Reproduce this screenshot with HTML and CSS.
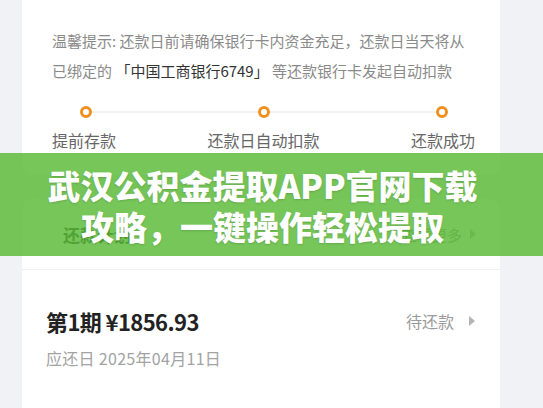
FILE: index.html
```html
<!DOCTYPE html>
<html lang="zh-CN">
<head>
    <meta charset="UTF-8">
    <meta name="viewport" content="width=device-width, initial-scale=1.0">
    <title>还款计划</title>
    <link rel="stylesheet" href="styles.css">
</head>
<body>

    <div class="page">
        <!-- Tip card -->
        <div class="card tip-card">
            <p class="tip-text">温馨提示: 还款日前请确保银行卡内资金充足，还款日当天将从已绑定的 <span class="bank">「中国工商银行6749」</span> 等还款银行卡发起自动扣款</p>

            <div class="steps">
                <span class="dot"></span>
                <span class="dot"></span>
                <span class="dot"></span>
            </div>
            <div class="step-labels">
                <span>提前存款</span>
                <span>还款日自动扣款</span>
                <span>还款成功</span>
            </div>
        </div>

        <!-- Plan card -->
        <div class="card plan-card">
            <div class="plan-header">
                <h3>还款计划</h3>
                <span class="more">查看更多 <i class="arrow"></i></span>
            </div>
            <div class="plan-row">
                <div class="plan-main">
                    <div class="plan-amount">第1期 ¥1856.93</div>
                    <div class="plan-date">应还日 2025年04月11日</div>
                </div>
                <span class="plan-status">待还款 <i class="arrow"></i></span>
            </div>
        </div>
    </div>

    <!-- Title banner -->
    <div class="banner">
        <h1>武汉公积金提取APP官网下载<br>攻略，一键操作轻松提取</h1>
    </div>

</body>
</html>
```

FILE: styles.css
```css
/* Basic Reset */
* {
    margin: 0;
    padding: 0;
    box-sizing: border-box;
}

body {
    font-family: 'Noto Sans CJK SC', 'Noto Sans', sans-serif;
    background-color: #f1f2f6;
    width: 543px;
    height: 408px;
    overflow: hidden;
    position: relative;
    color: #333;
}

.page {
    padding: 0 43px 0 22px;
}

.card {
    background: #fff;
    border-radius: 10px;
}

.tip-card {
    border-radius: 0 0 10px 10px;
    padding: 26px 24px 24px 30px;
}

.tip-text {
    font-size: 15px;
    line-height: 30px;
    color: #8a8a8a;
}

.tip-text .bank {
    color: #333;
}

.steps {
    position: relative;
    display: flex;
    justify-content: space-between;
    margin: 20px 28px 0 28px;
}

.steps::before {
    content: "";
    position: absolute;
    left: 10px;
    right: 10px;
    top: 5px;
    height: 2px;
    background: #f1f1f1;
}

.dot {
    position: relative;
    width: 12px;
    height: 12px;
    border: 3px solid #ef9121;
    border-radius: 50%;
    background: #fff;
}

.step-labels {
    display: flex;
    justify-content: space-between;
    margin-top: 11px;
    margin-right: 1px;
    font-size: 16px;
    line-height: 22px;
    color: #666;
}

.plan-card {
    margin-top: 24px;
    border-radius: 10px 10px 0 0;
    height: 220px;
}

.plan-header {
    display: flex;
    justify-content: space-between;
    align-items: center;
    height: 71px;
    padding: 0 24px 0 41px;
    border-bottom: 1px solid #eef0f3;
}

.plan-header h3 {
    font-size: 17px;
    font-weight: 700;
    color: #333;
}

.more {
    font-size: 15px;
    color: #999;
    display: flex;
    align-items: center;
    gap: 8px;
}

.arrow {
    display: inline-block;
    width: 0;
    height: 0;
    border-top: 5px solid transparent;
    border-bottom: 5px solid transparent;
    border-left: 6px solid #b5b5b5;
}

.plan-row {
    display: flex;
    justify-content: space-between;
    align-items: flex-start;
    padding: 36px 24px 0 24px;
}

.plan-amount {
    font-size: 22px;
    font-weight: 700;
    line-height: 30px;
    letter-spacing: -0.6px;
    color: #222;
}

.plan-date {
    margin-top: 11px;
    font-size: 16px;
    line-height: 22px;
    letter-spacing: 0.3px;
    color: #a3a3a3;
}

.plan-status {
    display: flex;
    align-items: center;
    gap: 15px;
    font-size: 16px;
    line-height: 30px;
    color: #9a9a9a;
    margin-right: 1px;
}

/* Green title overlay */
.banner {
    position: absolute;
    left: 0;
    right: 0;
    top: 153px;
    height: 103px;
    padding: 12px 18px 0 0;
    background: rgba(88, 186, 52, 0.82);
}

.banner h1 {
    font-size: 33px;
    font-weight: 900;
    line-height: 41px;
    color: #fff;
    text-align: center;
    text-shadow: 0 1px 2px rgba(0, 0, 0, 0.15);
}
```
